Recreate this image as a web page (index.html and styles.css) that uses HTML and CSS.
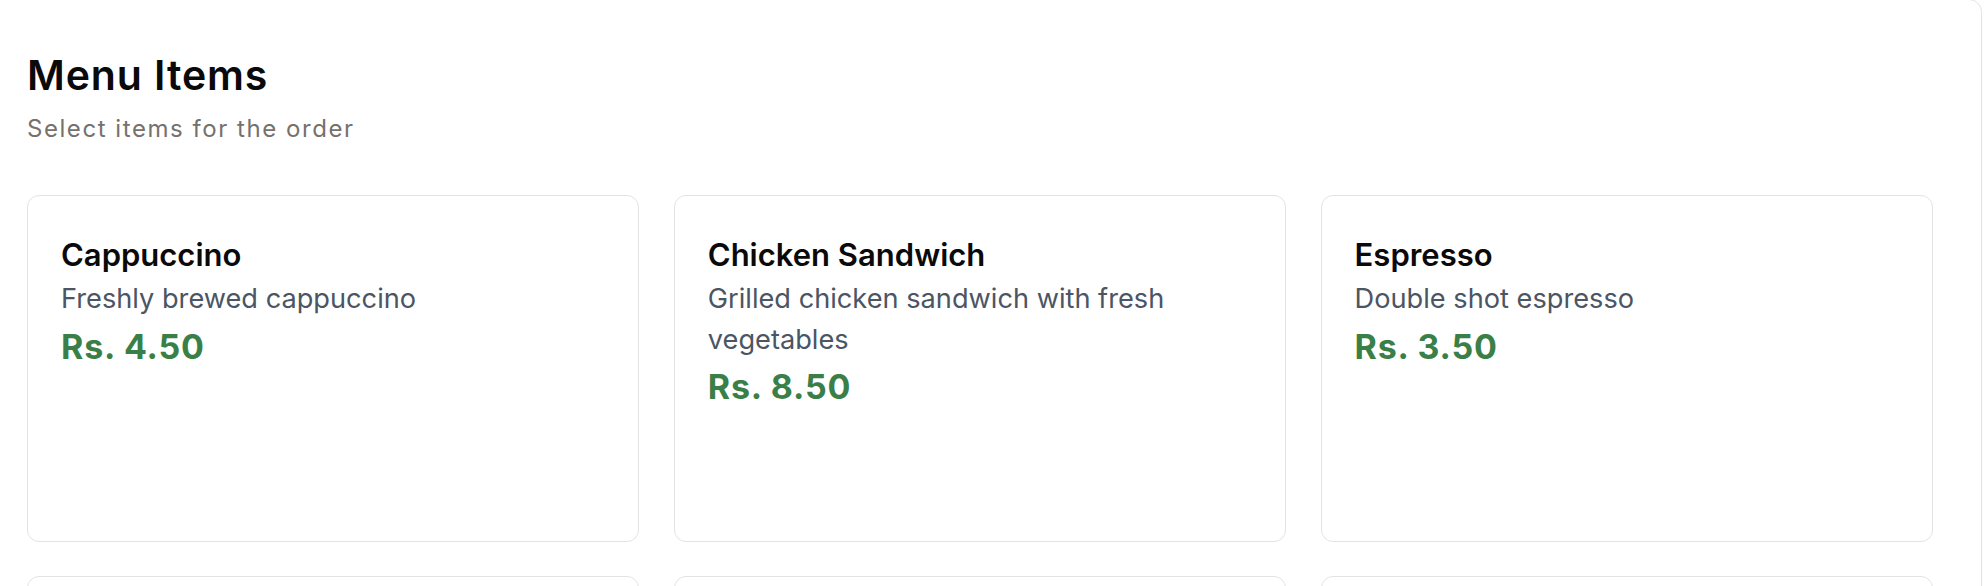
FILE: index.html
```html
<!DOCTYPE html>
<html lang="en">
<head>
<meta charset="utf-8">
<title>Menu Items</title>
<link rel="stylesheet" href="styles.css">
</head>
<body>
  <div class="page">
    <section class="panel">
      <header class="panel-header">
        <h1 class="panel-title">Menu Items</h1>
        <p class="panel-subtitle">Select items for the order</p>
      </header>
      <div class="menu-grid">
        <article class="menu-card">
          <h2 class="item-name">Cappuccino</h2>
          <p class="item-desc">Freshly brewed cappuccino</p>
          <p class="item-price">Rs. 4.50</p>
        </article>
        <article class="menu-card">
          <h2 class="item-name">Chicken Sandwich</h2>
          <p class="item-desc">Grilled chicken sandwich with fresh vegetables</p>
          <p class="item-price">Rs. 8.50</p>
        </article>
        <article class="menu-card">
          <h2 class="item-name">Espresso</h2>
          <p class="item-desc">Double shot espresso</p>
          <p class="item-price">Rs. 3.50</p>
        </article>
        <article class="menu-card"></article>
        <article class="menu-card"></article>
        <article class="menu-card"></article>
      </div>
    </section>
  </div>
</body>
</html>
```

FILE: styles.css
```css
* {
  box-sizing: border-box;
}

html, body {
  margin: 0;
  padding: 0;
  background: #ffffff;
  overflow: hidden;
}

body {
  font-family: Inter, "Noto Sans", "Liberation Sans", sans-serif;
  color: #0a0a0a;
  height: 586px;
}

.page {
  display: flex;
  padding-right: 4px;
}

.panel {
  flex: 1;
  margin-left: -20px;
  margin-top: -1px;
  background: #ffffff;
  border: 1px solid #e4e4e4;
  border-radius: 13px;
  padding: 48px 48px 40px 46px;
  box-shadow: 0 1px 2px rgba(0, 0, 0, 0.04);
}

.panel-header {
  margin-bottom: 49px;
}

.panel-title {
  margin: 0;
  font-size: 41px;
  line-height: 55px;
  font-weight: 600;
  letter-spacing: 0.9px;
  color: #0a0a0a;
}

.panel-subtitle {
  margin: 9px 0 0;
  font-size: 24px;
  line-height: 34px;
  font-weight: 400;
  letter-spacing: 1.55px;
  color: #76716d;
}

.menu-grid {
  display: grid;
  grid-template-columns: repeat(3, 1fr);
  gap: 34.4px;
}

.menu-card {
  height: 347px;
  border: 1px solid #e3e3e3;
  border-radius: 12px;
  padding: 35px 34px 34px 33px;
  background: #ffffff;
}

.item-name {
  margin: 0;
  font-size: 31px;
  line-height: 48px;
  font-weight: 600;
  color: #0a0a0a;
}

.item-desc {
  margin: 0;
  font-size: 27.2px;
  line-height: 40.5px;
  font-weight: 400;
  color: #4b5563;
}

.item-price {
  margin: 6px 0 0;
  font-size: 34px;
  line-height: 41px;
  font-weight: 700;
  letter-spacing: 0.8px;
  color: #3a7f47;
}
```
